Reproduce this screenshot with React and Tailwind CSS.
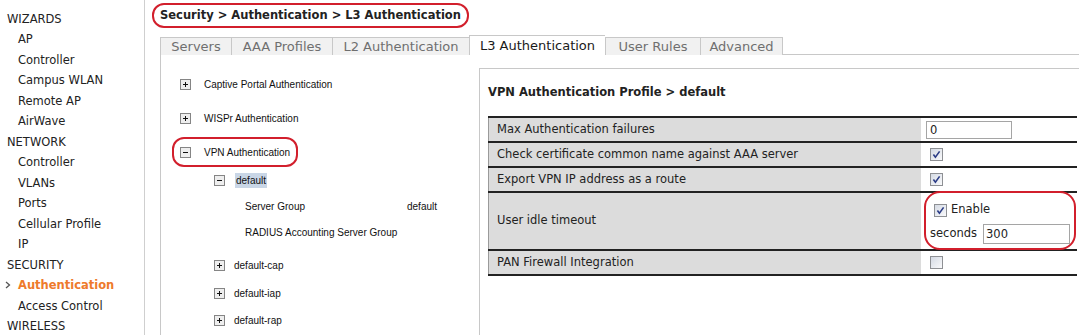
import React from 'react'

// controller web UI — Security > Authentication > L3 Authentication

const NAV = [
  { h: 'WIZARDS' }, { t: 'AP' }, { t: 'Controller' }, { t: 'Campus WLAN' }, { t: 'Remote AP' }, { t: 'AirWave' },
  { h: 'NETWORK' }, { t: 'Controller' }, { t: 'VLANs' }, { t: 'Ports' }, { t: 'Cellular Profile' }, { t: 'IP' },
  { h: 'SECURITY' }, { t: 'Authentication', active: true }, { t: 'Access Control' },
  { h: 'WIRELESS' },
]

const TABS = [
  { label: 'Servers', w: 'w-[71px]' },
  { label: 'AAA Profiles', w: 'w-[101px]' },
  { label: 'L2 Authentication', w: 'w-[137px]' },
  { label: 'L3 Authentication', w: 'w-[136px]', active: true },
  { label: 'User Rules', w: 'w-[95px]' },
  { label: 'Advanced', w: 'w-[83px]' },
]

function TreeIcon({ plus }) {
  return (
    <svg width="11" height="11" viewBox="0 0 11 11" className="shrink-0">
      <rect x="0.5" y="0.5" width="10" height="10" fill="#eeeeee" stroke="#858585" />
      <path d="M3 5.5H8" stroke="#111" />
      {plus && <path d="M5.5 3V8" stroke="#111" />}
    </svg>
  )
}

function Check({ on }) {
  return (
    <svg width="13" height="13" viewBox="0 0 13 13" className="shrink-0">
      <defs>
        <linearGradient id="cbg" x1="0" y1="0" x2="1" y2="1">
          <stop offset="0" stopColor="#d3d9e3" />
          <stop offset="1" stopColor="#fbfbfc" />
        </linearGradient>
      </defs>
      <rect x="0.5" y="0.5" width="12" height="12" fill="url(#cbg)" stroke="#8e9094" />
      {on && <path d="M3.4 6.6 L5.4 9.2 L9.6 3.4" fill="none" stroke="#2b3c86" strokeWidth="1.6" />}
    </svg>
  )
}

function Ring({ className }) {
  return <span className={`pointer-events-none absolute rounded-[12px] border-2 border-[#d21f2c] ${className}`} />
}

export default function App() {
  return (
    <div className="flex h-[335px] w-[1079px] overflow-hidden bg-white font-['DejaVu_Sans',sans-serif] text-[11.5px] text-[#222]">
      {/* left nav */}
      <div className="w-[145px] shrink-0 border-r border-[#cfcfcf] pt-[9px]">
        {NAV.map((n, i) =>
          n.h ? (
            <div key={i} className="pl-[7px] leading-[20.47px]">{n.h}</div>
          ) : (
            <div key={i} className="relative flex items-center pl-[18px] leading-[20.47px]">
              {n.active && (
                <svg width="6" height="8" viewBox="0 0 6 8" className="absolute left-[5px]">
                  <path d="M1 1 L4.5 4 L1 7" fill="none" stroke="#555" strokeWidth="1.3" />
                </svg>
              )}
              <span className={n.active ? 'font-bold text-[#ee7a2b]' : ''}>{n.t}</span>
            </div>
          )
        )}
      </div>

      {/* main */}
      <div className="flex flex-1 flex-col pl-[15px]">
        <div className="h-[35px] pt-[7px]">
          <span className="relative inline-block font-bold leading-[16px]">
            Security &gt; Authentication &gt; L3 Authentication
            <Ring className="-left-[8px] -right-[8px] -top-[4px] -bottom-[5px]" />
          </span>
        </div>

        {/* tabs */}
        <div className="flex h-[20px] items-end">
          {TABS.map((t) => (
            <div
              key={t.label}
              className={`${t.w} flex shrink-0 items-center justify-center border-l border-t border-[#c8c8c8] text-[13px] ${
                t.active ? 'h-[20px] bg-white text-[#1a1a1a]' : 'h-[18px] bg-[#f1f1f1] text-[#6f6f6f]'
              } ${t.label === 'Advanced' ? 'border-r' : ''}`}
            >
              {t.label}
            </div>
          ))}
          <div className="flex-1 border-b border-[#c8c8c8]" />
        </div>

        <div className="flex flex-1 border-l border-[#c8c8c8]">
          {/* tree */}
          <div className="w-[318px] shrink-0 pt-[19px] font-['Liberation_Sans',sans-serif] text-[10px] text-[#111]">
            <div className="flex h-[20px] items-center gap-[13px] pl-[19px]">
              <TreeIcon plus /> Captive Portal Authentication
            </div>
            <div className="mt-[14px] flex h-[20px] items-center gap-[13px] pl-[19px]">
              <TreeIcon plus /> WISPr Authentication
            </div>
            <div className="mt-[14px] flex h-[20px] items-center pl-[19px]">
              <span className="relative flex items-center gap-[13px]">
                <TreeIcon /> VPN Authentication
                <Ring className="-left-[8px] -right-[8px] -top-[8px] -bottom-[7px]" />
              </span>
            </div>
            <div className="mt-[8px] flex h-[20px] items-center gap-[10px] pl-[53px]">
              <TreeIcon />
              <span className="bg-[#c9d6e6] px-[1px] leading-[15px]">default</span>
            </div>
            <div className="mt-[6px] flex h-[20px] items-center pl-[84px]">
              <span className="w-[162px]">Server Group</span>
              <span>default</span>
            </div>
            <div className="mt-[6px] flex h-[20px] items-center pl-[84px]">RADIUS Accounting Server Group</div>
            {['default-cap', 'default-iap', 'default-rap'].map((d, i) => (
              <div key={d} className={`flex h-[20px] items-center gap-[9px] pl-[53px] ${i === 0 ? 'mt-[13px]' : i === 1 ? 'mt-[8px]' : 'mt-[7px]'}`}>
                <TreeIcon plus /> {d}
              </div>
            ))}
          </div>

          {/* profile panel */}
          <div className="mt-[13px] flex-1 border-l border-t border-[#c8c8c8] pl-[8px] pt-[15px]">
            <div className="font-bold leading-[16px]">VPN Authentication Profile &gt; default</div>
            <div className="mt-[16px] w-[589px] border-b-2 border-[#222]">
              <Row h="h-[25px]" label="Max Authentication failures">
                <input
                  readOnly
                  value="0"
                  className="ml-[5px] h-[18px] w-[86px] border border-[#a5a5a5] px-[3px] text-[11.5px] text-[#222] outline-none"
                />
              </Row>
              <Row h="h-[25px]" label="Check certificate common name against AAA server">
                <span className="ml-[9px]"><Check on /></span>
              </Row>
              <Row h="h-[25px]" label="Export VPN IP address as a route">
                <span className="ml-[9px]"><Check on /></span>
              </Row>
              <Row h="h-[58px]" label="User idle timeout">
                <div className="relative flex h-full flex-1 flex-col gap-[6px] pl-[9px] pt-[9px]">
                  <div className="flex h-[16px] items-center gap-[4px] pl-[4px]">
                    <Check on /> <span>Enable</span>
                  </div>
                  <div className="flex items-center gap-[6px]">
                    <span>seconds</span>
                    <input
                      readOnly
                      value="300"
                      className="h-[20px] w-[87px] border border-[#a5a5a5] px-[2px] text-[11.5px] text-[#222] outline-none"
                    />
                  </div>
                  <Ring className="left-[3px] right-[1px] -top-[2px] -bottom-[1px] rounded-[16px]" />
                </div>
              </Row>
              <Row h="h-[25px]" label="PAN Firewall Integration">
                <span className="ml-[9px]"><Check /></span>
              </Row>
            </div>
          </div>
        </div>
      </div>
    </div>
  )
}

function Row({ h, label, children }) {
  return (
    <div className={`flex ${h} border-t-2 border-[#222]`}>
      <div className="flex w-[433px] shrink-0 items-center border-l border-[#9a9a9a] bg-[#dcdcdc] pl-[8px]">{label}</div>
      <div className="flex flex-1 items-center">{children}</div>
    </div>
  )
}
